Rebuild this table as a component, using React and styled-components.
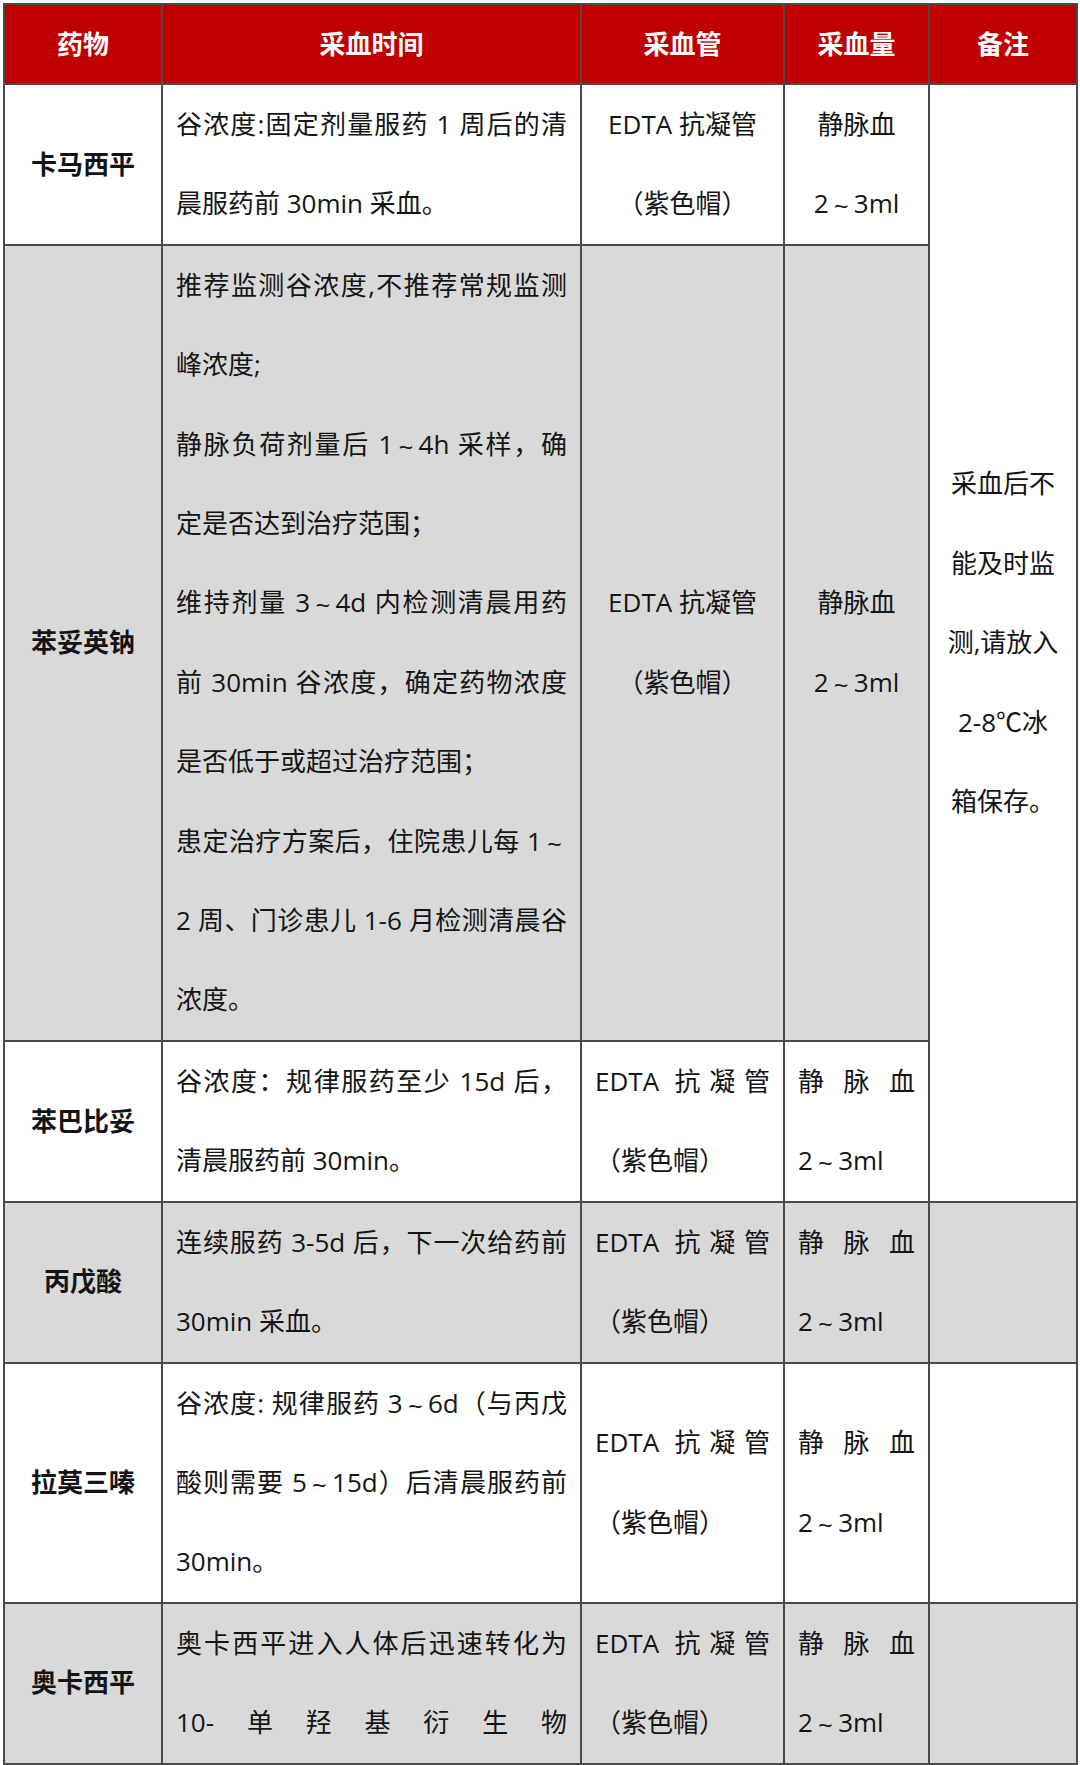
import React from 'react';
import styled, { createGlobalStyle } from 'styled-components';

const GlobalStyle = createGlobalStyle`
  html, body {
    margin: 0;
    padding: 0;
    background: #ffffff;
  }
  body {
    font-family: "Open Sans", "Noto Sans CJK SC", sans-serif;
  }
`;

const Page = styled.div`
  width: 1080px;
  box-sizing: border-box;
  padding: 3px 4px 3px 3px;
`;

const Table = styled.table`
  width: 1073px;
  border-collapse: collapse;
  table-layout: fixed;
  font-family: "Open Sans", "Noto Sans CJK SC", sans-serif;
  font-size: 26px;
  color: #141414;
`;

const HeadCell = styled.th`
  background: #c00000;
  color: #ffffff;
  font-weight: 700;
  border: 2px solid #4a4a4a;
  line-height: 78px;
  padding: 0;
  text-align: center;
`;

const Cell = styled.td`
  background: ${(p) => (p.$shaded ? '#d9d9d9' : '#ffffff')};
  border: 2px solid #4a4a4a;
  padding: 0 13px;
  vertical-align: middle;
  line-height: 79.4px;
  text-align: ${(p) => p.$align || 'left'};
`;

const NameCell = styled(Cell)`
  font-weight: 700;
  text-align: center;
  padding: 0;
`;

const Line = styled.div`
  white-space: nowrap;
  text-align: ${(p) => (p.$justify ? 'justify' : 'inherit')};
  text-align-last: ${(p) => (p.$justify ? 'justify' : 'auto')};
`;

const Tilde = styled.span`
  display: inline-block;
  padding: 0 0.2em;
  font-family: "Open Sans", sans-serif;
  transform: translateY(0.06em);
`;

const renderText = (text) => {
  const parts = text.split('～');
  return parts.map((part, i) => (
    <React.Fragment key={i}>
      {i > 0 && <Tilde>~</Tilde>}
      {part}
    </React.Fragment>
  ));
};

const Lines = ({ items }) =>
  items.map((it, i) => {
    const [text, justify] = Array.isArray(it) ? it : [it, false];
    return (
      <Line key={i} $justify={justify}>
        {renderText(text)}
      </Line>
    );
  });

const tubeCenter = ['EDTA 抗凝管', '（紫色帽）'];
const volCenter = ['静脉血', '2～3ml'];
const tubeJust = [['EDTA 抗凝管', true], '（紫色帽）'];
const volJust = [['静脉血', true], '2～3ml'];

const rows = [
  {
    name: '卡马西平',
    shaded: false,
    time: [['谷浓度:固定剂量服药 1 周后的清', true], '晨服药前 30min 采血。'],
    tube: tubeCenter,
    vol: volCenter,
    align: 'center',
  },
  {
    name: '苯妥英钠',
    shaded: true,
    time: [
      ['推荐监测谷浓度,不推荐常规监测', true],
      '峰浓度;',
      ['静脉负荷剂量后 1～4h 采样，确', true],
      '定是否达到治疗范围；',
      ['维持剂量 3～4d 内检测清晨用药', true],
      ['前 30min 谷浓度，确定药物浓度', true],
      '是否低于或超过治疗范围；',
      ['患定治疗方案后，住院患儿每 1～', true],
      ['2 周、门诊患儿 1-6 月检测清晨谷', true],
      '浓度。',
    ],
    tube: tubeCenter,
    vol: volCenter,
    align: 'center',
  },
  {
    name: '苯巴比妥',
    shaded: false,
    time: [['谷浓度：规律服药至少 15d 后，', true], '清晨服药前 30min。'],
    tube: tubeJust,
    vol: volJust,
    align: 'left',
  },
  {
    name: '丙戊酸',
    shaded: true,
    time: [['连续服药 3-5d 后，下一次给药前', true], '30min 采血。'],
    tube: tubeJust,
    vol: volJust,
    align: 'left',
    note: true,
  },
  {
    name: '拉莫三嗪',
    shaded: false,
    time: [
      ['谷浓度: 规律服药 3～6d（与丙戊', true],
      ['酸则需要 5～15d）后清晨服药前', true],
      '30min。',
    ],
    tube: tubeJust,
    vol: volJust,
    align: 'left',
    note: true,
  },
  {
    name: '奥卡西平',
    shaded: true,
    time: [
      ['奥卡西平进入人体后迅速转化为', true],
      ['10-单羟基衍生物', true],
    ],
    tube: tubeJust,
    vol: volJust,
    align: 'left',
    note: true,
  },
];

const noteLines = ['采血后不', '能及时监', '测,请放入', '2-8℃冰', '箱保存。'];

export default function App() {
  return (
    <>
      <GlobalStyle />
      <Page>
        <Table>
          <colgroup>
            <col style={{ width: 158 }} />
            <col style={{ width: 419 }} />
            <col style={{ width: 203 }} />
            <col style={{ width: 145 }} />
            <col style={{ width: 148 }} />
          </colgroup>
          <thead>
            <tr>
              <HeadCell>药物</HeadCell>
              <HeadCell>采血时间</HeadCell>
              <HeadCell>采血管</HeadCell>
              <HeadCell>采血量</HeadCell>
              <HeadCell>备注</HeadCell>
            </tr>
          </thead>
          <tbody>
            {rows.map((r, i) => (
              <tr key={r.name}>
                <NameCell $shaded={r.shaded}>{r.name}</NameCell>
                <Cell $shaded={r.shaded}>
                  <Lines items={r.time} />
                </Cell>
                <Cell $shaded={r.shaded} $align={r.align}>
                  <Lines items={r.tube} />
                </Cell>
                <Cell $shaded={r.shaded} $align={r.align}>
                  <Lines items={r.vol} />
                </Cell>
                {i === 0 && (
                  <Cell rowSpan={3} $align="center">
                    <Lines items={noteLines} />
                  </Cell>
                )}
                {r.note && <Cell $shaded={r.shaded} />}
              </tr>
            ))}
          </tbody>
        </Table>
      </Page>
    </>
  );
}
